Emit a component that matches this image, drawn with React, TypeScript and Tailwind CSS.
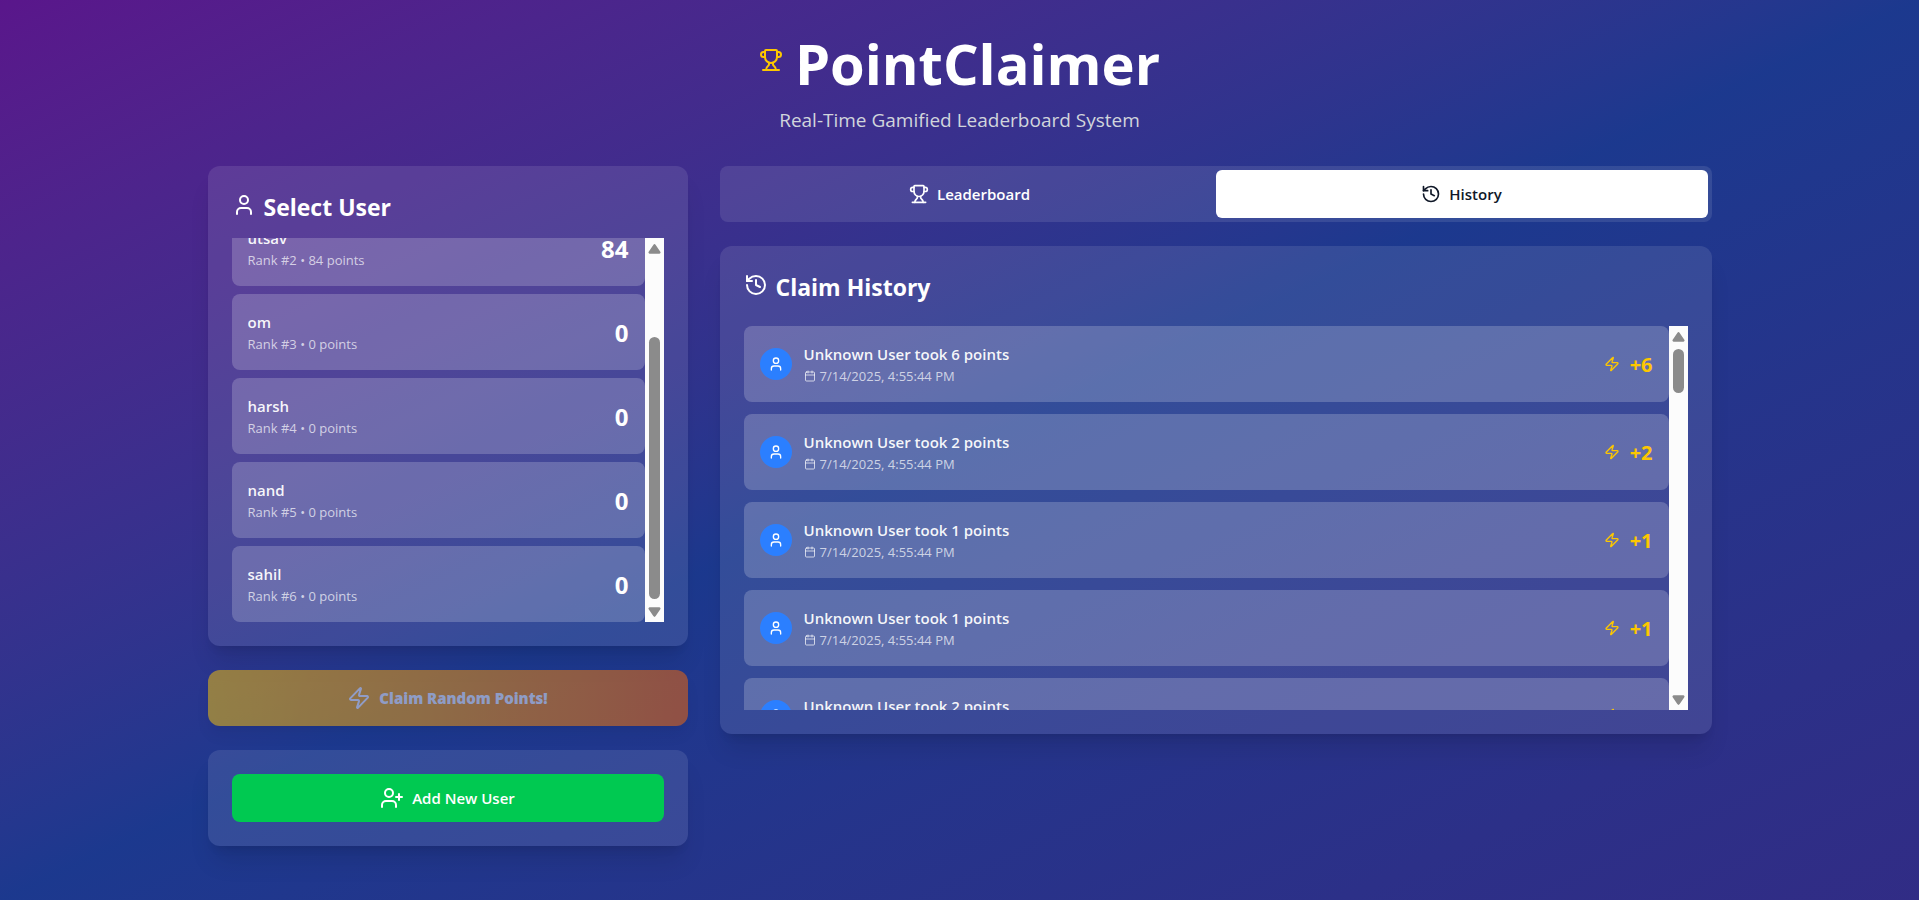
import { useLayoutEffect, useRef, useState } from "react";
import { Calendar, History, Trophy, User, UserPlus, Zap } from "lucide-react";

const users = [
  { name: "shubham", points: 96 },
  { name: "utsav", points: 84 },
  { name: "om", points: 0 },
  { name: "harsh", points: 0 },
  { name: "nand", points: 0 },
  { name: "sahil", points: 0 },
];

const claims = [6, 2, 1, 1, 2];

function ScrollBar({ thumb }: { thumb: string }) {
  return (
    <div aria-hidden="true" className="flex w-[19px] shrink-0 flex-col items-center bg-[#fcfcfc] pt-1.5 pb-[5px]">
      <svg width="13" height="10" viewBox="0 0 13 10" fill="#8b8b8b">
        <path d="M5.3.9a1.5 1.5 0 0 1 2.4 0l4.6 6.9A1.2 1.2 0 0 1 11.3 9.7H1.7A1.2 1.2 0 0 1 .7 7.8Z" />
      </svg>
      <div className="flex w-full flex-1 flex-col items-center pt-[7px] pb-2">
        <div className={`w-[11px] rounded-full bg-[#8b8b8b] ${thumb}`} />
      </div>
      <svg width="13" height="10" viewBox="0 0 13 10" fill="#8b8b8b">
        <path d="M5.3 9.1a1.5 1.5 0 0 0 2.4 0l4.6-6.9A1.2 1.2 0 0 0 11.3.3H1.7A1.2 1.2 0 0 0 .7 2.2Z" />
      </svg>
    </div>
  );
}

function UserList() {
  const list = useRef<HTMLDivElement>(null);
  useLayoutEffect(() => {
    if (list.current) list.current.scrollTop = list.current.scrollHeight;
  }, []);
  return (
    <div className="flex h-96">
      <div ref={list} className="flex-1 space-y-2 overflow-y-auto [scrollbar-width:none]">
        {users.map((user, i) => (
          <button
            key={user.name}
            type="button"
            className="flex w-full items-center justify-between rounded-lg bg-white/20 p-4 text-left"
          >
            <span className="flex flex-col">
              <span className="text-[15px] leading-6 font-semibold text-white/95">{user.name}</span>
              <span className="text-[13px] leading-5 text-white/70">
                Rank #{i + 1} • {user.points} points
              </span>
            </span>
            <span className="pt-0.5 text-2xl font-bold">{user.points}</span>
          </button>
        ))}
      </div>
      <ScrollBar thumb="mt-auto h-[262px]" />
    </div>
  );
}

function ClaimHistory() {
  return (
    <section className="rounded-xl bg-white/10 p-6 shadow-xl">
      <h2 className="mb-6 flex h-8 items-center gap-2 text-[23px] leading-8 font-bold">
        <History size={24} className="mb-0.5" />
        <span className="pt-0.5">Claim History</span>
      </h2>
      <div className="flex h-96">
        <ul className="flex-1 space-y-3 overflow-y-auto [scrollbar-width:none]">
          {claims.map((points, i) => (
            <li key={i} className="flex items-center justify-between rounded-lg bg-white/20 p-4">
              <div className="flex items-center gap-3">
                <span className="flex size-8 items-center justify-center rounded-full bg-blue-500">
                  <User size={16} />
                </span>
                <div>
                  <p className="text-[15px] leading-6 font-semibold text-white/95">
                    Unknown User took {points} points
                  </p>
                  <p className="flex items-center gap-1 text-[13px] leading-5 text-white/70">
                    <Calendar size={12} />
                    7/14/2025, 4:55:44 PM
                  </p>
                </div>
              </div>
              <div className="flex items-center gap-2.5 text-xl font-bold text-yellow-400">
                <Zap size={16} />
                <span className="pt-0.5">+{points}</span>
              </div>
            </li>
          ))}
        </ul>
        <ScrollBar thumb="h-11" />
      </div>
    </section>
  );
}

export default function App() {
  const [tab, setTab] = useState("history");
  const tabClass = (active: boolean) =>
    `flex h-12 flex-1 items-center justify-center gap-2 rounded-md text-[15px] leading-6 font-semibold ${
      active ? "bg-white text-gray-900" : "text-white"
    }`;
  return (
    <div className="min-h-screen bg-gradient-to-br from-purple-900 via-blue-900 to-indigo-900 font-['Open_Sans','Noto_Sans',sans-serif] text-white">
      <div className="mx-auto max-w-[1536px] px-4 py-8">
        <header className="mb-8 text-center">
          <h1 className="mb-3 flex items-center justify-center gap-3 text-[56px] leading-[62px] font-bold">
            <Trophy size={24} className="mb-1.5 text-yellow-400" />
            PointClaimer
          </h1>
          <p className="text-[19px] leading-7 text-gray-300">Real-Time Gamified Leaderboard System</p>
        </header>
        <main className="grid grid-cols-1 gap-8 lg:grid-cols-3">
          <div className="space-y-6">
            <section className="rounded-xl bg-white/10 p-6 shadow-xl">
              <h2 className="mb-4 flex h-8 items-center gap-2 text-[23px] leading-8 font-bold">
                <User size={24} className="mb-0.5" />
                <span className="pt-0.5">Select User</span>
              </h2>
              <UserList />
            </section>
            <button
              type="button"
              disabled
              className="flex h-14 w-full items-center justify-center gap-2 rounded-xl bg-gradient-to-r from-yellow-400 to-orange-500 text-[15px] leading-6 font-extrabold opacity-50 shadow-lg"
            >
              <Zap size={24} />
              Claim Random Points!
            </button>
            <section className="rounded-xl bg-white/10 p-6 shadow-xl">
              <button
                type="button"
                className="flex h-12 w-full items-center justify-center gap-2 rounded-lg bg-green-500 text-[15px] leading-6 font-semibold"
              >
                <UserPlus size={24} />
                Add New User
              </button>
            </section>
          </div>
          <div className="space-y-6 lg:col-span-2">
            <nav className="flex rounded-lg bg-white/10 p-1">
              <button type="button" onClick={() => setTab("leaderboard")} className={tabClass(tab === "leaderboard")}>
                <Trophy size={20} />
                Leaderboard
              </button>
              <button type="button" onClick={() => setTab("history")} className={tabClass(tab === "history")}>
                <History size={20} />
                History
              </button>
            </nav>
            <ClaimHistory />
          </div>
        </main>
      </div>
    </div>
  );
}
